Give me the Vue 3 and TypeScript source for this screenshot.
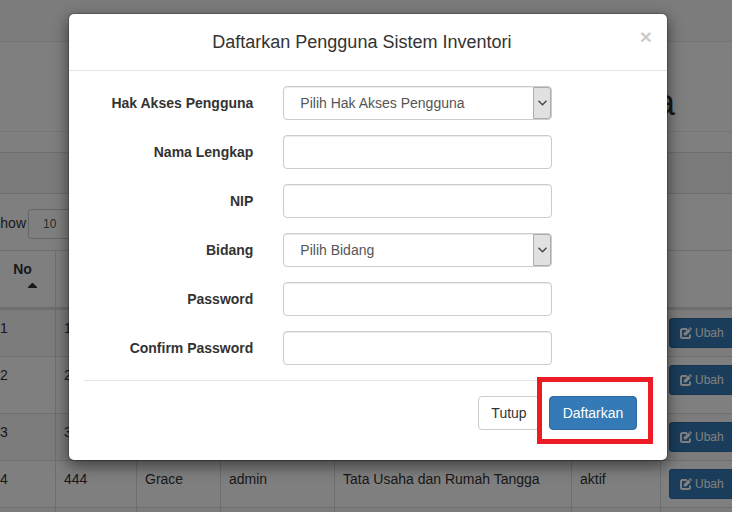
<script setup lang="ts">
import { ref } from 'vue'

interface User {
  no: number | null
  nip: string
  nama: string
  akses: string
  bidang: string
  status: string
  tall?: boolean
}

interface Field {
  id: string
  label: string
  type: 'text' | 'password' | 'select'
  placeholder?: string
}

const users: User[] = [
  { no: 1, nip: '111', nama: '', akses: '', bidang: '', status: '' },
  { no: 2, nip: '222', nama: '', akses: '', bidang: '', status: '', tall: true },
  { no: 3, nip: '333', nama: '', akses: '', bidang: '', status: '' },
  { no: 4, nip: '444', nama: 'Grace', akses: 'admin', bidang: 'Tata Usaha dan Rumah Tangga', status: 'aktif' },
  { no: null, nip: '', nama: '', akses: '', bidang: '', status: '' },
]

const fields: Field[] = [
  { id: 'akses', label: 'Hak Akses Pengguna', type: 'select', placeholder: 'Pilih Hak Akses Pengguna' },
  { id: 'nama', label: 'Nama Lengkap', type: 'text' },
  { id: 'nip', label: 'NIP', type: 'text' },
  { id: 'bidang', label: 'Bidang', type: 'select', placeholder: 'Pilih Bidang' },
  { id: 'password', label: 'Password', type: 'password' },
  { id: 'confirm', label: 'Confirm Password', type: 'password' },
]

const form = ref<Record<string, string>>({
  akses: '', nama: '', nip: '', bidang: '', password: '', confirm: '',
})
</script>

<template>
  <div class="app">
    <div class="page">
      <nav class="navbar"></nav>
      <header class="page-header"><h1>Pengguna</h1></header>
      <section class="panel">
        <div class="panel-heading"></div>
        <div class="panel-body">
          <div class="length">
            <label for="length">Show</label>
            <select id="length" class="length-select"><option>10</option></select>
          </div>
          <table class="users">
            <colgroup>
              <col class="c-no"><col class="c-nip"><col class="c-nama"><col class="c-akses">
              <col class="c-bidang"><col class="c-status"><col class="c-aksi">
            </colgroup>
            <thead>
              <tr>
                <th>
                  <span class="th-text">No</span>
                  <svg class="sort" width="9" height="5" viewBox="0 0 9 5"><path d="M4 0h1l4 4v1H0V4z" fill="#333" /></svg>
                </th>
                <th></th><th></th><th></th><th></th><th></th><th></th>
              </tr>
            </thead>
            <tbody>
              <tr v-for="(u, i) in users" :key="i" :class="{ tall: u.tall }">
                <td>{{ u.no }}</td>
                <td>{{ u.nip }}</td>
                <td>{{ u.nama }}</td>
                <td>{{ u.akses }}</td>
                <td>{{ u.bidang }}</td>
                <td>{{ u.status }}</td>
                <td>
                  <button v-if="u.no" class="btn-edit" type="button">
                    <svg width="12" height="12" viewBox="0 0 12 12" fill="none">
                      <path d="M7 2H2.5A1.500 1.500 0 0 0 1 3.500v6A1.500 1.500 0 0 0 2.500 11h6A1.500 1.500 0 0 0 10 9.500V7.500" stroke="#fff" stroke-width="2" />
                      <path d="M3.800 6.200 8.400 1.600l2.300 2.300-4.600 4.600H3.800z" fill="#fff" />
                      <path d="m9.100 1 .9-.9L12 2.100l-.9 1.100z" fill="#fff" />
                    </svg>
                    <span>Ubah</span>
                  </button>
                </td>
              </tr>
            </tbody>
          </table>
        </div>
      </section>
    </div>

    <div class="backdrop">
      <form class="modal" role="dialog" aria-labelledby="modal-title" @submit.prevent>
        <header class="modal-header">
          <h4 id="modal-title">Daftarkan Pengguna Sistem Inventori</h4>
          <button class="close" type="button">×</button>
        </header>
        <div class="modal-body">
          <div v-for="f in fields" :key="f.id" class="form-row">
            <label :for="f.id">{{ f.label }}</label>
            <div v-if="f.type === 'select'" class="select-wrap">
              <select :id="f.id" v-model="form[f.id]" class="control">
                <option value="">{{ f.placeholder }}</option>
              </select>
              <span class="arrow">
                <svg width="9" height="6" viewBox="0 0 9 6"><path d="M.5.8 4.500 4.800 8.500.8" fill="none" stroke="#444" stroke-width="1.300" /></svg>
              </span>
            </div>
            <input v-else :id="f.id" v-model="form[f.id]" class="control" :type="f.type">
          </div>
          <footer class="modal-footer">
            <button class="btn" type="button">Tutup</button>
            <div class="submit-wrap">
              <button class="btn primary" type="submit">Daftarkan</button>
              <span class="highlight"></span>
            </div>
          </footer>
        </div>
      </form>
    </div>
  </div>
</template>

<style>
body {
  margin: 0;
  background: #fff;
}
</style>

<style scoped>
* {
  box-sizing: border-box;
}
.app {
  position: relative;
  height: 100vh;
  overflow: hidden;
  font-family: "Liberation Sans", Arial, sans-serif;
  font-size: 14px;
  line-height: 20px;
  color: #333;
}
button,
input,
select {
  font-family: inherit;
  font-size: 14px;
  margin: 0;
}
.navbar {
  height: 42px;
  background: #f8f8f8;
  border-bottom: 1px solid #e7e7e7;
}
.page-header {
  display: flex;
  align-items: flex-end;
  justify-content: flex-end;
  height: 90px;
  padding: 0 57px 8px 0;
  border-bottom: 1px solid #eee;
}
h1 {
  margin: 0;
  font-size: 36px;
  font-weight: 500;
  line-height: 40px;
}
.panel {
  margin: 20px -25px 0;
  border: 1px solid #ddd;
}
.panel-heading {
  height: 41px;
  background: #f5f5f5;
  border-bottom: 1px solid #ddd;
}
.panel-body {
  padding: 15px;
}
.length {
  display: flex;
  align-items: flex-start;
  gap: 2px;
  margin-bottom: 11px;
}
.length label {
  padding-top: 4px;
}
.length-select {
  appearance: none;
  width: 75px;
  height: 30px;
  padding: 0 14px;
  border: 1px solid #ccc;
  border-radius: 3px;
  background: #fff;
  color: #555;
  font-size: 12px;
}
.users {
  width: 100%;
  table-layout: fixed;
  border-collapse: collapse;
}
.c-no { width: 64px; }
.c-nip { width: 81px; }
.c-nama { width: 84px; }
.c-akses { width: 114px; }
.c-bidang { width: 237px; }
.c-status { width: 89px; }
th,
td {
  padding: 8px;
  border: 1px solid #ddd;
  vertical-align: top;
  text-align: left;
}
th {
  height: 58px;
  border-bottom-width: 3px;
  text-align: center;
}
th:first-child {
  padding-left: 16px;
  padding-right: 18px;
}
.th-text {
  display: block;
}
.sort {
  display: block;
  margin: 4px 0 0 20px;
}
td {
  height: 47px;
}
.tall td {
  height: 57px;
}
tbody tr:nth-child(odd) {
  background: #f9f9f9;
}
.btn-edit {
  display: flex;
  align-items: center;
  gap: 3px;
  height: 30px;
  padding: 0 10px;
  border: 1px solid #2e6da4;
  border-radius: 3px;
  background: #337ab7;
  color: #fff;
  font-size: 12px;
}
.backdrop {
  position: absolute;
  inset: 0;
  padding: 13px 0 0 4px;
  background: rgba(0, 0, 0, 0.5);
}
.modal {
  max-width: 600px;
  margin: 0 auto;
  border: 1px solid rgba(0, 0, 0, 0.2);
  border-radius: 6px;
  background: #fff;
  background-clip: padding-box;
  box-shadow: 0 5px 15px rgba(0, 0, 0, 0.5);
}
.modal-header {
  display: flex;
  align-items: flex-start;
  padding: 15px;
  border-bottom: 1px solid #e5e5e5;
}
h4 {
  flex: 1;
  margin: 0;
  font-size: 18px;
  font-weight: 500;
  line-height: 26px;
  text-align: center;
}
.close {
  padding: 0;
  border: 0;
  background: none;
  color: #000;
  font-size: 21px;
  font-weight: 700;
  line-height: 16px;
  opacity: 0.2;
}
.modal-body {
  padding: 15px 0;
}
.form-row {
  display: grid;
  grid-template-columns: 4fr 6fr 2fr;
  align-items: center;
  margin-bottom: 15px;
}
.form-row label {
  padding-right: 15px;
  font-weight: 700;
  text-align: right;
}
.select-wrap {
  position: relative;
  margin: 0 15px;
}
.control {
  display: block;
  height: 34px;
  padding: 6px 12px;
  border: 1px solid #ccc;
  border-radius: 4px;
  background: #fff;
  box-shadow: inset 0 1px 1px rgba(0, 0, 0, 0.08);
  color: #555;
}
input.control {
  min-width: 0;
  margin: 0 15px;
}
select.control {
  appearance: none;
  width: 100%;
  padding-left: 16px;
}
.arrow {
  position: absolute;
  top: 1px;
  right: 1px;
  bottom: 1px;
  display: flex;
  align-items: center;
  justify-content: center;
  width: 18px;
  border: 1px solid #adadad;
  border-radius: 0 3px 3px 0;
  background: #e1e1e1;
  pointer-events: none;
}
.modal-footer {
  display: flex;
  justify-content: flex-end;
  gap: 9px;
  margin: 0 15px;
  padding: 15px;
  border-top: 1px solid #e5e5e5;
}
.submit-wrap {
  position: relative;
}
.btn {
  display: block;
  min-width: 62px;
  height: 34px;
  padding: 0 12px;
  border: 1px solid #ccc;
  border-radius: 4px;
  background: #fff;
  color: #333;
}
.primary {
  min-width: 88px;
  border-color: #2e6da4;
  background: #337ab7;
  color: #fff;
}
.highlight {
  position: absolute;
  inset: -19px -16px -14px -12px;
  border: 5px solid #ed1c24;
  pointer-events: none;
}
</style>
